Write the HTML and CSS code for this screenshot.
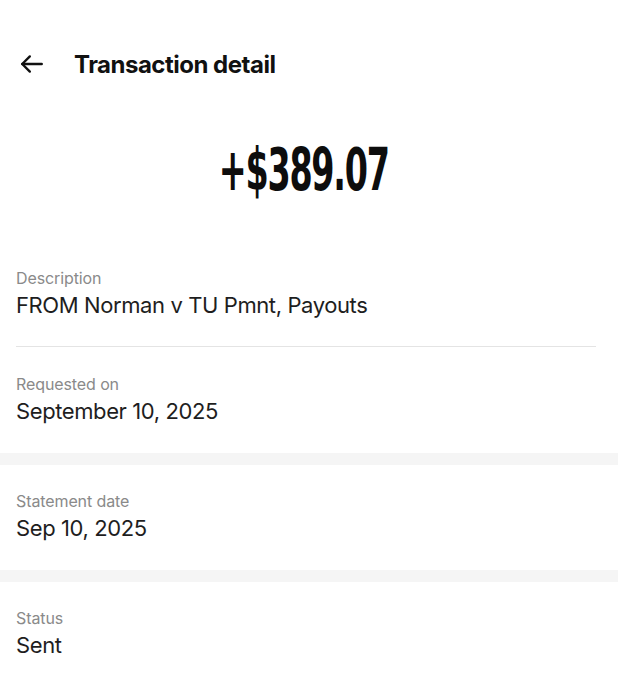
FILE: index.html
```html
<!DOCTYPE html>
<html lang="en">
<head>
    <meta charset="UTF-8">
    <meta name="viewport" content="width=device-width, initial-scale=1.0">
    <title>Transaction detail</title>
    <link rel="stylesheet" href="styles.css">
</head>
<body>
    <div id="screen">
        <div class="header">
            <a class="back" href="#" aria-label="Back">
                <svg width="26" height="26" viewBox="0 0 24 24" fill="none" stroke="#111" stroke-width="2.2" stroke-linecap="round" stroke-linejoin="round">
                    <path d="M21 12H3"/>
                    <path d="M10 5l-7 7 7 7"/>
                </svg>
            </a>
            <h1>Transaction detail</h1>
        </div>

        <div class="amount"><span>+$389.07</span></div>

        <div class="item first">
            <div class="label">Description</div>
            <div class="value">FROM Norman v TU Pmnt, Payouts</div>
        </div>
        <div class="divider"></div>
        <div class="item">
            <div class="label">Requested on</div>
            <div class="value">September 10, 2025</div>
        </div>
        <div class="band"></div>
        <div class="item">
            <div class="label">Statement date</div>
            <div class="value">Sep 10, 2025</div>
        </div>
        <div class="band"></div>
        <div class="item">
            <div class="label">Status</div>
            <div class="value">Sent</div>
        </div>
    </div>
</body>
</html>
```

FILE: styles.css
```css
body {
    margin: 0;
    background: #fff;
    font-family: Inter, "Noto Sans", Arial, sans-serif;
    color: #1a1a1a;
}
#screen {
    width: 630px;
    min-height: 679px;
    background: #fff;
}
.header {
    display: flex;
    align-items: center;
    height: 40px;
    padding: 44px 0 0 19px;
}
.back {
    display: flex;
    width: 26px;
    height: 26px;
}
.header h1 {
    margin: 0 0 0 29px;
    font-size: 24px;
    font-weight: 700;
    letter-spacing: -0.5px;
    color: #111;
}
.amount {
    display: flex;
    justify-content: center;
    height: 80px;
    align-items: center;
    margin: 46px 0 31px;
    padding-right: 22px;
}
.amount span {
    display: inline-block;
    font-family: "Liberation Sans Narrow", "DejaVu Sans Condensed", Arial, sans-serif;
    font-size: 58px;
    font-weight: 700;
    letter-spacing: -2px;
    color: #0d0d0d;
    transform: scaleX(0.64);
}
.item {
    padding: 27px 16px 28px;
}
.item.first {
    padding-bottom: 27px;
}
.band + .item {
    padding-top: 26px;
}
.label {
    font-size: 16px;
    line-height: 20px;
    color: #8a8a8a;
    letter-spacing: -0.1px;
}
.value {
    margin-top: 3px;
    font-size: 22px;
    line-height: 28px;
    color: #1e1e1e;
    letter-spacing: -0.4px;
}
.divider {
    height: 1px;
    margin: 0 34px 0 16px;
    background: #e4e4e4;
}
.band {
    width: 618px;
    height: 12px;
    background: #f5f5f5;
}
```
